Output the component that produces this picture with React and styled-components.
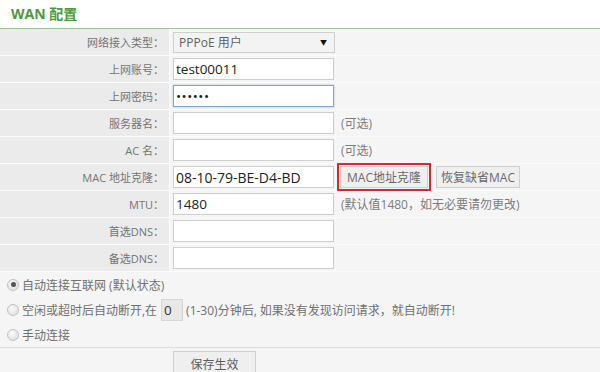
import React from "react";
import styled, { createGlobalStyle } from "styled-components";

const Global = createGlobalStyle`
  html, body { margin: 0; padding: 0; background: #ffffff; }
  body { font-family: "Open Sans", "Noto Sans CJK SC", sans-serif; }
  * { box-sizing: border-box; }
`;

const Page = styled.div`
  width: 600px;
  height: 372px;
  overflow: hidden;
  background: #ffffff;
`;

const Title = styled.div`
  height: 29px;
  border-bottom: 1px solid #9cc296;
  padding-left: 11px;
  padding-bottom: 3px;
  display: flex;
  align-items: center;
  font-size: 14px;
  font-weight: 700;
  color: #4e9a3a;
`;

const Table = styled.div`
  display: flex;
  flex-direction: column;
`;

const Row = styled.div`
  display: grid;
  grid-template-columns: 170px 1fr;
  height: 27px;
  border-bottom: 1px solid #fbfbfb;
`;

const Label = styled.div`
  background: #ebebeb;
  color: #747474;
  font-size: 11px;
  padding-right: 5px;
  display: flex;
  align-items: center;
  justify-content: flex-end;
  white-space: nowrap;
  border-right: 1px solid #fafafa;
`;

const Value = styled.div`
  background: #f5f5f5;
  display: flex;
  align-items: center;
  padding-left: 3px;
  gap: ${(p) => p.$gap || 7}px;
`;

const TextInput = styled.div`
  width: 161px;
  height: 22px;
  flex-shrink: 0;
  border: 1px solid ${(p) => (p.$focus ? "#7ea6d3" : "#cdcdcd")};
  box-shadow: ${(p) => (p.$focus ? "0 0 2px rgba(90,140,200,0.5)" : "none")};
  background: #ffffff;
  color: #222;
  font-size: ${(p) => p.$fs || 13.5}px;
  padding-left: 2px;
  display: flex;
  align-items: center;
  white-space: nowrap;
  letter-spacing: ${(p) => (p.$dots ? "0.5px" : "0")};
`;

const Select = styled.div`
  width: 162px;
  height: 21px;
  border: 1px solid #cfcfcf;
  background: #f3f3f3;
  color: #606060;
  font-size: 12px;
  padding: 0 7px 0 5px;
  display: flex;
  align-items: center;
  justify-content: space-between;
`;

const Arrow = styled.span`
  font-size: 7px;
  color: #111;
`;

const Hint = styled.span`
  color: #7c7c7c;
  font-size: 12px;
  white-space: nowrap;
`;

const Btn = styled.div`
  height: 22px;
  flex-shrink: 0;
  white-space: nowrap;
  border: 1px solid #cfcfcf;
  background: #efefef;
  color: #6a6a6a;
  font-size: 12px;
  display: flex;
  align-items: center;
  justify-content: center;
  width: ${(p) => p.$w}px;
  outline: ${(p) => (p.$mark ? "2px solid #d62a2a" : "none")};
  outline-offset: 1px;
  margin-left: ${(p) => p.$ml || 0}px;
`;

const RadioArea = styled.div`
  background: #f5f5f5;
  border-bottom: 1px solid #dedede;
`;

const RadioRow = styled.div`
  height: 25px;
  display: flex;
  align-items: center;
  padding-left: 7px;
  color: #707070;
  font-size: 12px;
  white-space: nowrap;
`;

const Radio = styled.span`
  width: 12px;
  height: 12px;
  flex-shrink: 0;
  border-radius: 50%;
  border: 1px solid #c2c2c2;
  background: radial-gradient(circle at 40% 35%, #fafafa, #dadada);
  margin-right: 3px;
  display: inline-flex;
  align-items: center;
  justify-content: center;
  &::after {
    content: "";
    width: 5px;
    height: 5px;
    border-radius: 50%;
    background: ${(p) => (p.$on ? "#555" : "transparent")};
  }
`;

const SmallInput = styled.span`
  display: inline-flex;
  align-items: center;
  width: 22px;
  height: 22px;
  margin: 0 3px 0 4px;
  border: 1px solid #d6d6d6;
  background: #e8e8e8;
  color: #333;
  font-size: 13.5px;
  padding-left: 2px;
`;

const SaveRow = styled.div`
  background: #f5f5f5;
  height: 30px;
  padding: 3px 0 0 173px;
`;

const SaveBtn = styled.div`
  width: 83px;
  height: 26px;
  border: 1px solid #cfcfcf;
  background: #efefef;
  color: #5e5e5e;
  font-size: 12px;
  display: flex;
  align-items: center;
  justify-content: center;
`;

const rows = [
  { label: "网络接入类型：", kind: "select" },
  { label: "上网账号：", kind: "input", value: "test00011" },
  { label: "上网密码：", kind: "input", value: "••••••", focus: true, dots: true },
  { label: "服务器名：", kind: "input", value: "", hint: "(可选)" },
  { label: "AC 名：", kind: "input", value: "", hint: "(可选)" },
  { label: "MAC 地址克隆：", kind: "mac", value: "08-10-79-BE-D4-BD" },
  { label: "MTU：", kind: "input", value: "1480", hint: "(默认值1480，如无必要请勿更改)" },
  { label: "首选DNS：", kind: "input", value: "" },
  { label: "备选DNS：", kind: "input", value: "" },
];

export default function App() {
  return (
    <Page>
      <Global />
      <Title>WAN 配置</Title>
      <Table>
        {rows.map((r) => (
          <Row key={r.label}>
            <Label>{r.label}</Label>
            {r.kind === "select" ? (
              <Value>
                <Select>
                  <span>PPPoE 用户</span>
                  <Arrow>▼</Arrow>
                </Select>
              </Value>
            ) : r.kind === "mac" ? (
              <Value $gap={6}>
                <TextInput $fs={14}>{r.value}</TextInput>
                <Btn $mark $w={88}>MAC地址克隆</Btn>
                <Btn $w={84} $ml={2}>恢复缺省MAC</Btn>
              </Value>
            ) : (
              <Value>
                <TextInput $focus={r.focus} $dots={r.dots}>{r.value}</TextInput>
                {r.hint && <Hint>{r.hint}</Hint>}
              </Value>
            )}
          </Row>
        ))}
      </Table>
      <RadioArea>
        <RadioRow>
          <Radio $on />
          自动连接互联网 (默认状态)
        </RadioRow>
        <RadioRow>
          <Radio />
          空闲或超时后自动断开,在
          <SmallInput>0</SmallInput>
          (1-30)分钟后, 如果没有发现访问请求，就自动断开!
        </RadioRow>
        <RadioRow>
          <Radio />
          手动连接
        </RadioRow>
      </RadioArea>
      <SaveRow>
        <SaveBtn>保存生效</SaveBtn>
      </SaveRow>
    </Page>
  );
}
